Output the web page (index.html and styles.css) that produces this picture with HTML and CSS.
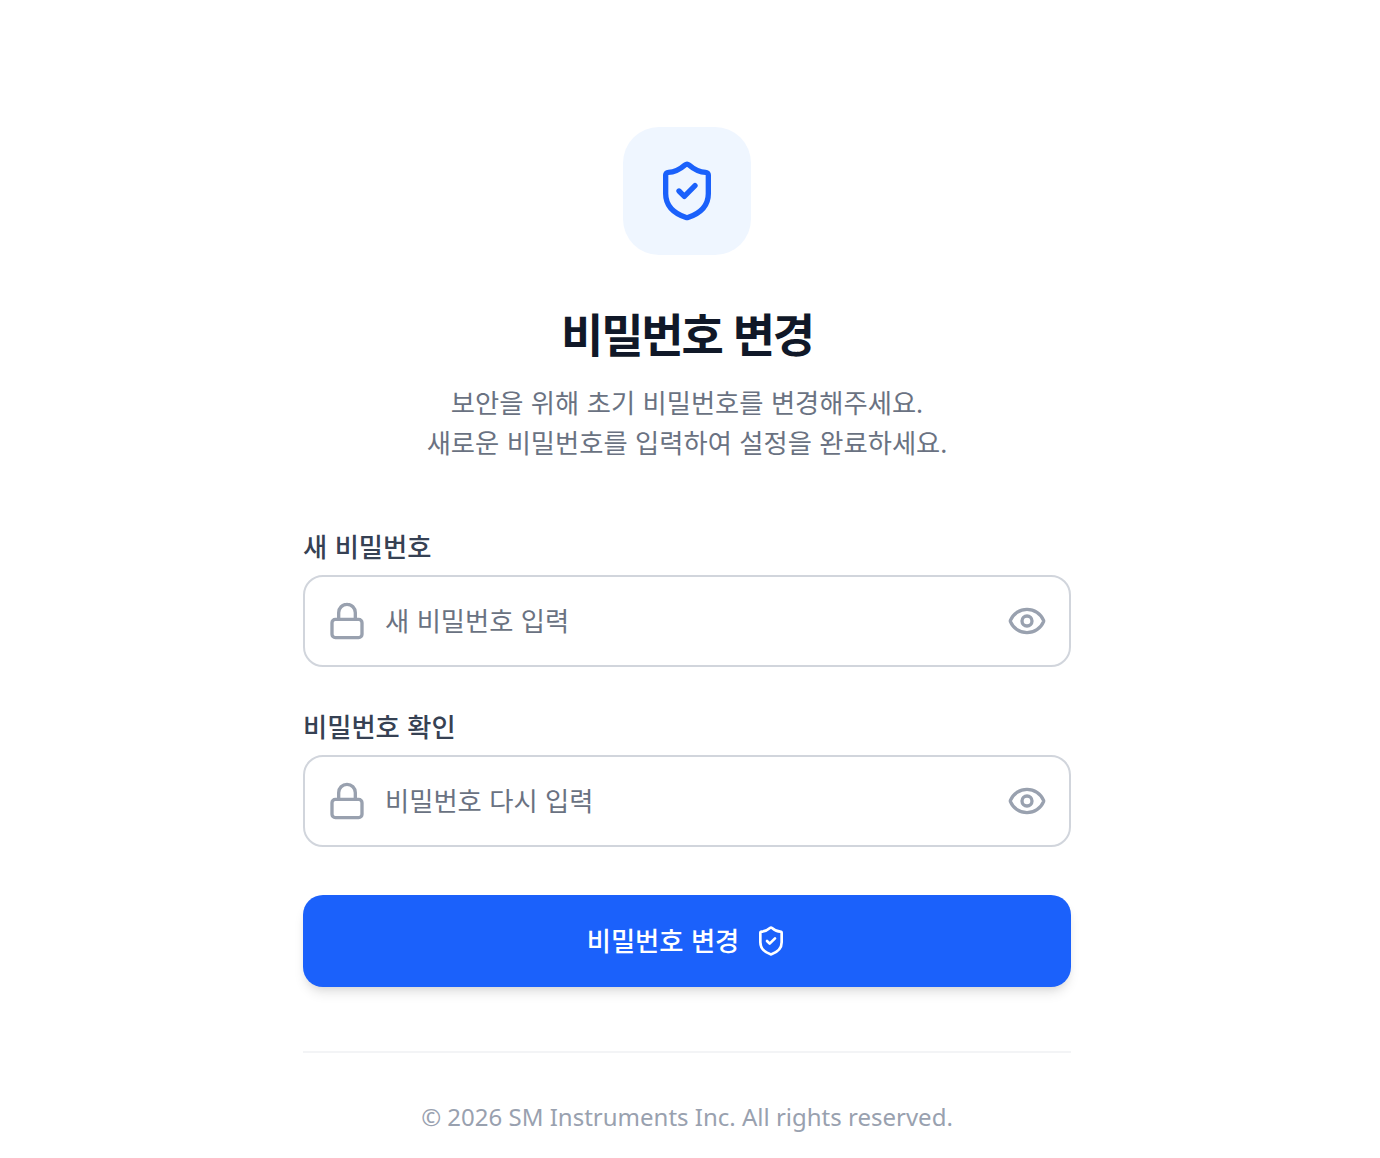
FILE: index.html
```html
<!DOCTYPE html>
<html lang="ko">
<head>
<meta charset="utf-8">
<title>비밀번호 변경</title>
<link rel="stylesheet" href="styles.css">
</head>
<body>
<svg class="sprite" aria-hidden="true">
  <symbol id="shield" viewBox="0 0 24 24"><path d="M20 13c0 5-3.5 7.5-7.66 8.95a1 1 0 0 1-.67-.01C7.5 20.5 4 18 4 13V6a1 1 0 0 1 1-1c2 0 4.5-1.2 6.24-2.72a1.17 1.17 0 0 1 1.52 0C14.51 3.81 17 5 19 5a1 1 0 0 1 1 1z"/><path d="m9 12 2 2 4-4"/></symbol>
  <symbol id="lock" viewBox="0 0 24 24"><rect x="3" y="11" width="18" height="11" rx="2"/><path d="M7 11V7a5 5 0 0 1 10 0v4"/></symbol>
  <symbol id="eye" viewBox="0 0 24 24"><path d="M2.062 12.348a1 1 0 0 1 0-.696 10.75 10.75 0 0 1 19.876 0 1 1 0 0 1 0 .696 10.75 10.75 0 0 1-19.876 0"/><circle cx="12" cy="12" r="3"/></symbol>
</svg>
<main class="card">
  <header class="header">
    <div class="badge"><svg class="icon icon-badge"><use href="#shield"/></svg></div>
    <h1 class="title">비밀번호 변경</h1>
    <p class="intro">보안을 위해 초기 비밀번호를 변경해주세요.<br>새로운 비밀번호를 입력하여 설정을 완료하세요.</p>
  </header>
  <form class="form">
    <div class="group">
      <label class="label" for="new-password">새 비밀번호</label>
      <div class="field">
        <svg class="icon icon-field"><use href="#lock"/></svg>
        <input class="input" id="new-password" type="password" placeholder="새 비밀번호 입력">
        <button class="toggle" type="button" aria-label="비밀번호 표시"><svg class="icon icon-field"><use href="#eye"/></svg></button>
      </div>
    </div>
    <div class="group">
      <label class="label" for="confirm-password">비밀번호 확인</label>
      <div class="field">
        <svg class="icon icon-field"><use href="#lock"/></svg>
        <input class="input" id="confirm-password" type="password" placeholder="비밀번호 다시 입력">
        <button class="toggle" type="button" aria-label="비밀번호 표시"><svg class="icon icon-field"><use href="#eye"/></svg></button>
      </div>
    </div>
    <button class="submit" type="button"><span>비밀번호 변경</span><svg class="icon icon-submit"><use href="#shield"/></svg></button>
  </form>
  <footer class="footer">© 2026 SM Instruments Inc. All rights reserved.</footer>
</main>
</body>
</html>
```
FILE: styles.css
```css
* { box-sizing: border-box; }
body { margin: 0; background: #fff; font-family: "Noto Sans", "Noto Sans CJK KR", sans-serif; }
.sprite { position: absolute; width: 0; height: 0; }
.card { width: 768px; margin-left: 303px; padding-top: 127px; }
.header { display: flex; flex-direction: column; align-items: center; text-align: center; }
.badge { display: flex; align-items: center; justify-content: center; width: 128px; height: 128px; border-radius: 36px; background: #eff6ff; color: #1b61fb; }
.icon { display: block; flex: none; fill: none; stroke: currentColor; stroke-width: 2; stroke-linecap: round; stroke-linejoin: round; }
.icon-badge { width: 64px; height: 64px; }
.icon-field { width: 40px; height: 40px; }
.icon-submit { width: 32px; height: 32px; }
.title { margin: 47px 0 0; font-size: 46px; line-height: 64px; font-weight: 700; letter-spacing: -2.1px; word-spacing: 1px; color: #101828; }
.intro { margin: 17px 0 0; font-size: 26.3px; line-height: 40px; word-spacing: .6px; color: #6a7282; }
.form { margin-top: 64px; }
.group { margin-bottom: 40px; }
.label { display: block; height: 48px; font-size: 26.3px; line-height: 40px; font-weight: 500; word-spacing: .6px; color: #364153; }
.field { display: flex; align-items: center; height: 92px; padding: 0 22px; border: 2px solid #d1d5dc; border-radius: 20px; color: #99a1af; }
.input { flex: 1; min-width: 0; height: 88px; margin: 0 0 0 18px; padding: 0; border: 0; outline: 0; background: transparent; font: 400 26.3px/40px "Noto Sans", "Noto Sans CJK KR", sans-serif; word-spacing: .6px; color: #101828; }
.input::placeholder { color: #6a7282; opacity: 1; }
.toggle { padding: 0; border: 0; background: transparent; color: inherit; }
.submit { display: flex; align-items: center; justify-content: center; gap: 16px; width: 100%; height: 92px; margin-top: 48px; padding: 0; border: 0; border-radius: 20px; background: #1b61fb; color: #fff; font: 500 26.3px/40px "Noto Sans", "Noto Sans CJK KR", sans-serif; word-spacing: .6px; box-shadow: 0 8px 12px -2px rgba(0,0,0,.1), 0 4px 8px -4px rgba(0,0,0,.1); }
.footer { margin-top: 64px; padding-top: 46px; border-top: 2px solid #f3f4f6; font-size: 24px; line-height: 36px; text-align: center; color: #99a1af; }
```
